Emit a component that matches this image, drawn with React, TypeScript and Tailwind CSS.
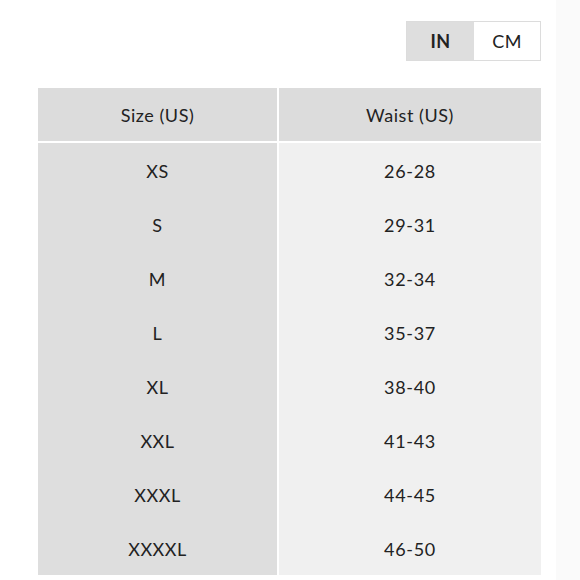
const rows = [
  ["XS", "26-28"],
  ["S", "29-31"],
  ["M", "32-34"],
  ["L", "35-37"],
  ["XL", "38-40"],
  ["XXL", "41-43"],
  ["XXXL", "44-45"],
  ["XXXXL", "46-50"],
];

export default function App() {
  return (
    <div className="w-[580px] h-[580px] bg-white flex font-['Lato',sans-serif] text-[#222] overflow-hidden">
      <div className="w-[556px] flex flex-col">
        {/* unit toggle */}
        <div className="flex justify-end pr-[15px] pt-[21px]">
          <div className="flex h-[40px] border border-[#dcdcdc] text-[18px]">
            <div className="w-[67px] bg-[#dedede] flex items-center justify-center font-bold tracking-wide">IN</div>
            <div className="w-[66px] bg-white flex items-center justify-center tracking-wide">CM</div>
          </div>
        </div>

        {/* size table */}
        <div className="ml-[38px] mt-[27px] w-[503px] flex flex-col text-[18px] tracking-[0.03em]">
          <div className="flex h-[53px]">
            <div className="w-[239px] bg-[#dcdcdc] flex items-center justify-center pt-[2px]">Size (US)</div>
            <div className="w-[2px] bg-white" />
            <div className="flex-1 bg-[#dcdcdc] flex items-center justify-center pt-[2px]">Waist (US)</div>
          </div>
          <div className="h-[2px] bg-white" />
          {rows.map(([size, waist]) => (
            <div key={size} className="flex h-[54px]">
              <div className="w-[239px] bg-[#dedede] flex items-center justify-center pt-[2px]">{size}</div>
              <div className="w-[2px] bg-white" />
              <div className="flex-1 bg-[#f0f0f0] flex items-center justify-center pt-[2px] tracking-[0.04em]">{waist}</div>
            </div>
          ))}
        </div>
      </div>
      <div className="flex-1 bg-[#fafafa]" />
    </div>
  );
}
